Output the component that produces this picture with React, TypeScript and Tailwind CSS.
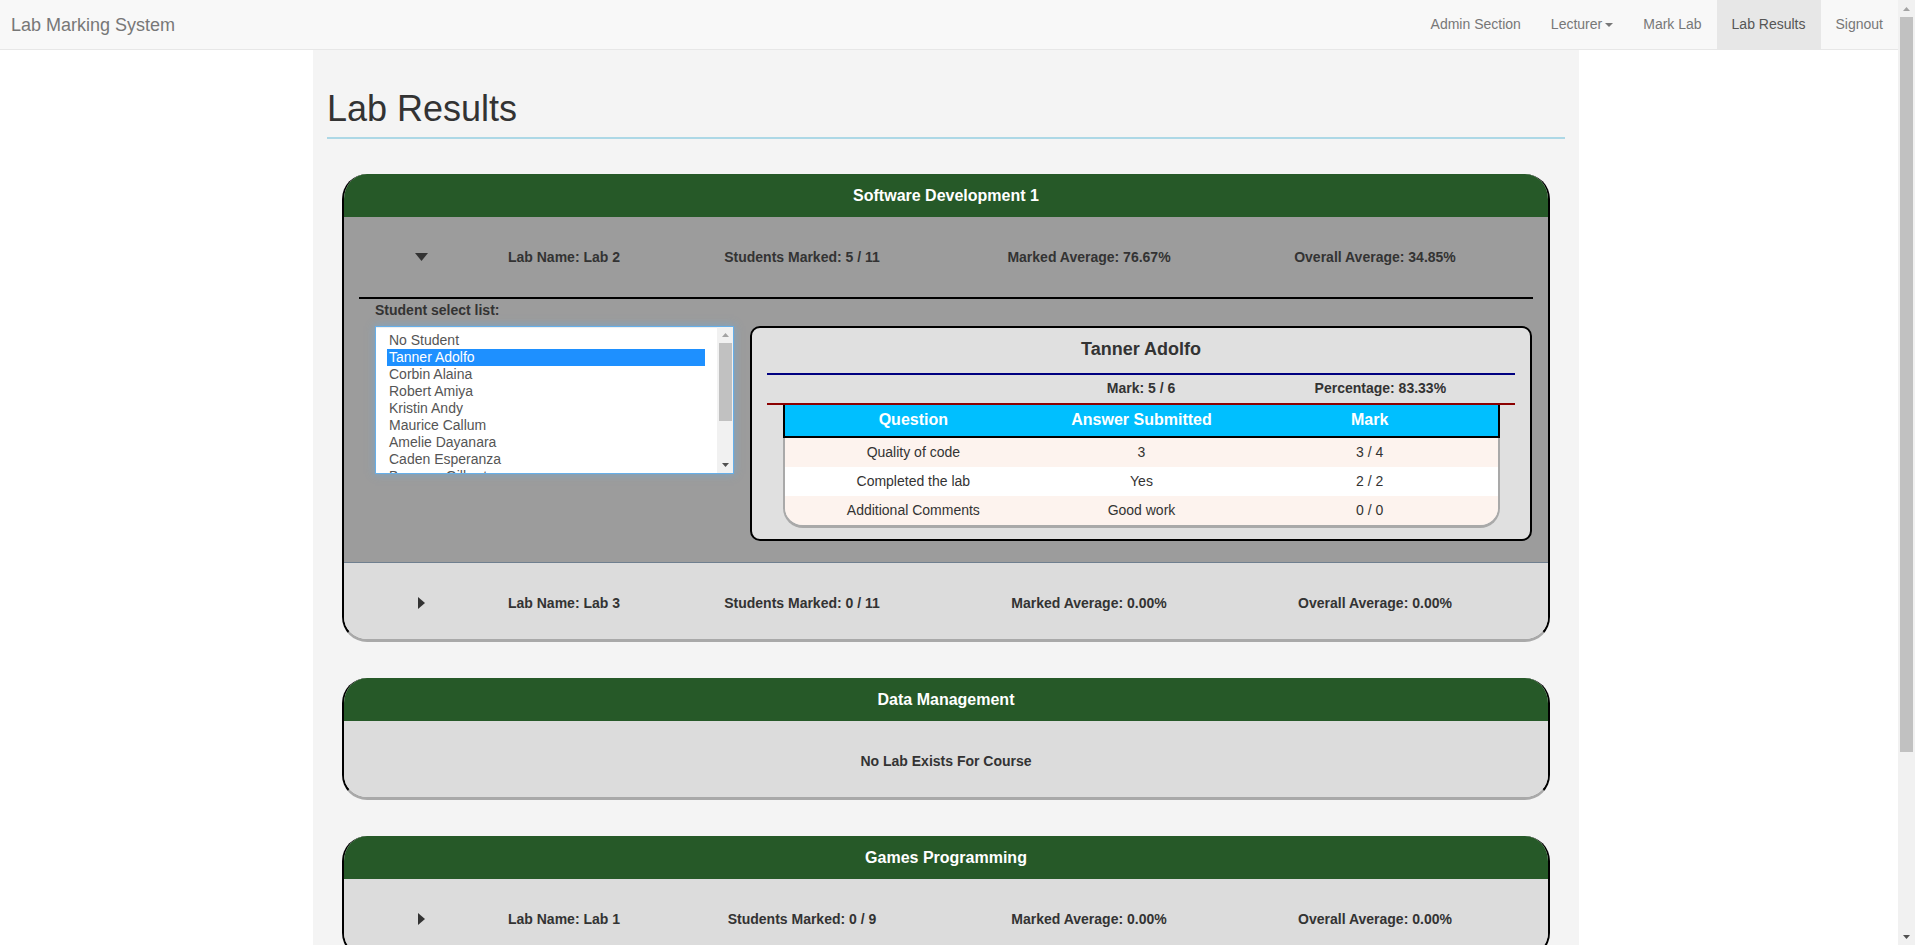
import React from "react";

type Lab = {
  name: string;
  marked: string;
  avg: string;
  overall: string;
};

const students = [
  "No Student",
  "Tanner Adolfo",
  "Corbin Alaina",
  "Robert Amiya",
  "Kristin Andy",
  "Maurice Callum",
  "Amelie Dayanara",
  "Caden Esperanza",
  "Brennan Gilberto",
  "Lydia Harlan",
];

const answers = [
  { q: "Quality of code", a: "3", m: "3 / 4" },
  { q: "Completed the lab", a: "Yes", m: "2 / 2" },
  { q: "Additional Comments", a: "Good work", m: "0 / 0" },
];

function CaretDown() {
  return (
    <svg width="13" height="8" viewBox="0 0 13 8">
      <path d="M0 0h13L6.5 8z" fill="#333" />
    </svg>
  );
}

function CaretRight() {
  return (
    <svg width="7" height="12" viewBox="0 0 7 12">
      <path d="M0 0l7 6-7 6z" fill="#333" />
    </svg>
  );
}

function LabRow({ lab, open, tall }: { lab: Lab; open?: boolean; tall?: boolean }) {
  return (
    <div
      className={`grid grid-cols-[154px_132px_344px_230px_342px] items-center text-center text-[14px] font-bold text-[#333] ${
        tall ? "h-[80px] pt-[1px]" : "h-[76px] pt-[5px]"
      }`}
    >
      <div className="flex justify-center">{open ? <CaretDown /> : <CaretRight />}</div>
      <div>Lab Name: {lab.name}</div>
      <div>Students Marked: {lab.marked}</div>
      <div>Marked Average: {lab.avg}</div>
      <div>Overall Average: {lab.overall}</div>
    </div>
  );
}

function Card({ title, children }: { title: string; children: React.ReactNode }) {
  return (
    <section className="mb-[36px] overflow-hidden rounded-[25px] border-x-2 border-b-[3px] border-x-black border-b-[#a9a9a9]">
      <div className="flex h-[43px] items-center justify-center bg-[#265928] pt-[1px] text-[16px] font-bold text-white">
        {title}
      </div>
      {children}
    </section>
  );
}

function StudentList() {
  return (
    <div className="flex h-[148px] w-[359px] shrink-0 overflow-hidden border border-[#66afe9] bg-white shadow-[inset_0_1px_1px_rgba(0,0,0,0.075),0_0_8px_rgba(102,175,233,0.6)]">
      <div className="flex-1 pl-[11px] pr-[12px] pt-[5px] text-[14px] leading-[17px] text-[#555]">
        {students.map((s) => (
          <div key={s} className={s === "Tanner Adolfo" ? "bg-[#1e90ff] px-[2px] text-white" : "px-[2px]"}>
            {s}
          </div>
        ))}
      </div>
      <div className="flex w-[16px] flex-col bg-[#f1f1f1]">
        <div className="flex h-[16px] items-center justify-center">
          <svg width="7" height="4" viewBox="0 0 7 4">
            <path d="M0 4L3.5 0 7 4z" fill="#a3a3a3" />
          </svg>
        </div>
        <div className="ml-[2px] mr-[1px] h-[78px] bg-[#c1c1c1]" />
        <div className="flex-1" />
        <div className="flex h-[16px] items-center justify-center">
          <svg width="7" height="4" viewBox="0 0 7 4">
            <path d="M0 0h7L3.5 4z" fill="#505050" />
          </svg>
        </div>
      </div>
    </div>
  );
}

function StudentCard() {
  return (
    <div className="w-[782px] shrink-0 rounded-[10px] border-2 border-black bg-[#e0e0e0] pb-[11px] text-[#333]">
      <div className="pt-[10px] text-center text-[18px] font-bold leading-[22px]">Tanner Adolfo</div>
      <div className="mx-[15px] mt-[13px] border-t-2 border-[#000080]" />
      <div className="mx-[15px] grid grid-cols-[36%_28%_36%] pb-[5px] pt-[3px] text-center text-[14px] font-bold leading-[20px]">
        <div />
        <div>Mark: 5 / 6</div>
        <div>Percentage: 83.33%</div>
      </div>
      <div className="mx-[15px] border-t-2 border-[#8b0000]" />
      <div className="ml-[31px] mr-[30px]">
        <div className="grid h-[33px] grid-cols-[36%_28%_36%] items-center border-x-2 border-b-2 border-black bg-[#00bfff] text-center text-[16px] font-bold text-white">
          <div>Question</div>
          <div>Answer Submitted</div>
          <div>Mark</div>
        </div>
        <div className="overflow-hidden rounded-b-[20px] border-x-2 border-b-[3px] border-[#a9a9a9] text-[14px]">
          {answers.map((r, i) => (
            <div
              key={r.q}
              className={`grid h-[29px] grid-cols-[36%_28%_36%] items-center pt-[1px] text-center ${
                i % 2 === 0 ? "bg-[#fdf3ee]" : "bg-white"
              }`}
            >
              <div>{r.q}</div>
              <div>{r.a}</div>
              <div>{r.m}</div>
            </div>
          ))}
        </div>
      </div>
    </div>
  );
}

function Navbar() {
  const items = ["Admin Section", "Lecturer", "Mark Lab", "Lab Results", "Signout"];
  return (
    <nav className="flex h-[50px] shrink-0 items-center justify-between border-b border-[#e7e7e7] bg-[#f8f8f8]">
      <span className="pl-[11px] text-[18px] leading-[20px] text-[#777]">Lab Marking System</span>
      <ul className="flex h-full">
        {items.map((it) => (
          <li
            key={it}
            className={`flex items-center px-[15px] text-[14px] ${
              it === "Lab Results" ? "bg-[#e7e7e7] text-[#555]" : "text-[#777]"
            }`}
          >
            {it}
            {it === "Lecturer" && (
              <span className="ml-[3px] inline-block border-x-4 border-t-4 border-x-transparent border-t-[#777]" />
            )}
          </li>
        ))}
      </ul>
    </nav>
  );
}

function PageScrollbar() {
  return (
    <div className="flex w-[17px] shrink-0 flex-col bg-[#f1f1f1]">
      <div className="flex h-[17px] items-center justify-center">
        <svg width="7" height="4" viewBox="0 0 7 4">
          <path d="M0 4L3.5 0 7 4z" fill="#a3a3a3" />
        </svg>
      </div>
      <div className="ml-[2px] h-[735px] w-[13px] bg-[#c1c1c1]" />
      <div className="flex-1" />
      <div className="flex h-[17px] items-center justify-center">
        <svg width="7" height="4" viewBox="0 0 7 4">
          <path d="M0 0h7L3.5 4z" fill="#505050" />
        </svg>
      </div>
    </div>
  );
}

export default function App() {
  return (
    <div className="flex h-[945px] w-full overflow-hidden bg-white font-['Liberation_Sans',Arial,sans-serif] text-[#333]">
      <div className="flex min-w-0 flex-1 flex-col">
        <Navbar />
        <main className="flex-1 overflow-hidden">
          <div className="ml-[313px] h-full w-[1266px] bg-[#f4f4f4] px-[14px] pt-[39px]">
            <h1 className="border-b-2 border-[#add8e6] pb-[8px] text-[36px] font-normal leading-[39.6px] text-[#333]">
              Lab Results
            </h1>
            <div className="px-[15px] pt-[35px]">
              <Card title="Software Development 1">
                <div className="bg-[#9c9c9c]">
                  <LabRow lab={{ name: "Lab 2", marked: "5 / 11", avg: "76.67%", overall: "34.85%" }} open tall />
                  <div className="mx-[15px] border-t-2 border-black pl-[16px]">
                    <div className="h-[27px] pt-[1px] text-[14px] font-bold leading-[20px] text-[#333]">
                      Student select list:
                    </div>
                    <div className="flex gap-[16px] pb-[21px]">
                      <StudentList />
                      <StudentCard />
                    </div>
                  </div>
                </div>
                <div className="border-t border-[#6f7f8f] bg-[#dcdcdc]">
                  <LabRow lab={{ name: "Lab 3", marked: "0 / 11", avg: "0.00%", overall: "0.00%" }} />
                </div>
              </Card>
              <Card title="Data Management">
                <div className="flex h-[76px] items-center justify-center bg-[#dcdcdc] pt-[6px] text-[14px] font-bold text-[#333]">
                  No Lab Exists For Course
                </div>
              </Card>
              <Card title="Games Programming">
                <div className="bg-[#dcdcdc]">
                  <LabRow lab={{ name: "Lab 1", marked: "0 / 9", avg: "0.00%", overall: "0.00%" }} />
                </div>
              </Card>
            </div>
          </div>
        </main>
      </div>
      <PageScrollbar />
    </div>
  );
}
